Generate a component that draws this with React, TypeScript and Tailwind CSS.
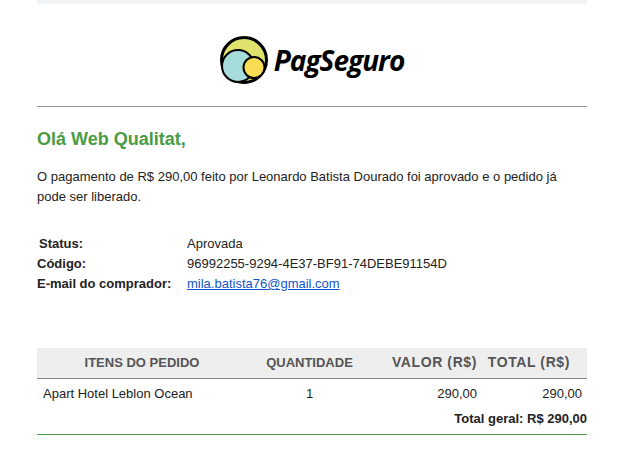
function Logo() {
  return (
    <div className="flex items-center gap-[6px]">
      <svg width="48" height="48" viewBox="0 0 48 48">
        <circle cx="24" cy="24" r="22.5" fill="#dfe36e" stroke="#000" strokeWidth="3" />
        <circle cx="18" cy="30" r="16" fill="#a6dcd9" stroke="#000" strokeWidth="2" />
        <circle cx="34" cy="31.5" r="10.5" fill="#f8de55" stroke="#000" strokeWidth="2" />
      </svg>
      <span className="mb-[1px] font-['Open_Sans',sans-serif] text-[28px] leading-none font-bold tracking-[-1px] text-black italic">
        PagSeguro
      </span>
    </div>
  );
}

function Info({ label, children, className = "" }: { label: string; children: React.ReactNode; className?: string }) {
  return (
    <div className="flex h-5 items-center">
      <div className={"w-[150px] font-bold " + className}>{label}</div>
      <div>{children}</div>
    </div>
  );
}

export default function App() {
  return (
    <div className="min-h-[457px] bg-white font-['Liberation_Sans',Arial,sans-serif] text-[13px] text-[#222222]">
      <div className="ml-[37px] w-[550px]">
        <div className="h-1 bg-[#f1f4f6]" />
        <div className="flex h-[103px] items-center justify-center border-b border-[#999999] pt-[10px]">
          <Logo />
        </div>

        <h1 className="mt-[22px] text-[18px] leading-[21px] font-bold text-[#4a9c44]">Olá Web Qualitat,</h1>
        <p className="mt-[17px] leading-5">
          O pagamento de R$ 290,00 feito por Leonardo Batista Dourado foi aprovado e o pedido já pode ser liberado.
        </p>

        <div className="mt-[27px]">
          <Info label="Status:" className="pl-[2px]">Aprovada</Info>
          <Info label="Código:">96992255-9294-4E37-BF91-74DEBE91154D</Info>
          <Info label="E-mail do comprador:">
            <a href="#" className="text-[#1155cc] underline">mila.batista76@gmail.com</a>
          </Info>
        </div>

        <table className="mt-[54px] w-full table-fixed border-b border-[#4a9c44]">
          <thead>
            <tr className="h-[30px] border-b border-[#888888] bg-[#eeeeee] font-bold text-[#555555]">
              <th className="w-[210px] text-center">ITENS DO PEDIDO</th>
              <th className="w-[125px] text-center">QUANTIDADE</th>
              <th className="w-[110px] pr-[5px] text-right text-[14px] tracking-[0.6px]">VALOR (R$)</th>
              <th className="pr-[17px] text-right text-[14px] tracking-[0.6px]">TOTAL (R$)</th>
            </tr>
          </thead>
          <tbody>
            <tr className="h-[31px]">
              <td className="pl-[6px]">Apart Hotel Leblon Ocean</td>
              <td className="text-center">1</td>
              <td className="pr-[5px] text-right">290,00</td>
              <td className="pr-[5px] text-right">290,00</td>
            </tr>
            <tr className="h-[25px]">
              <td colSpan={4} className="pb-[5px] text-right font-bold">Total geral: R$ 290,00</td>
            </tr>
          </tbody>
        </table>
      </div>
    </div>
  );
}
